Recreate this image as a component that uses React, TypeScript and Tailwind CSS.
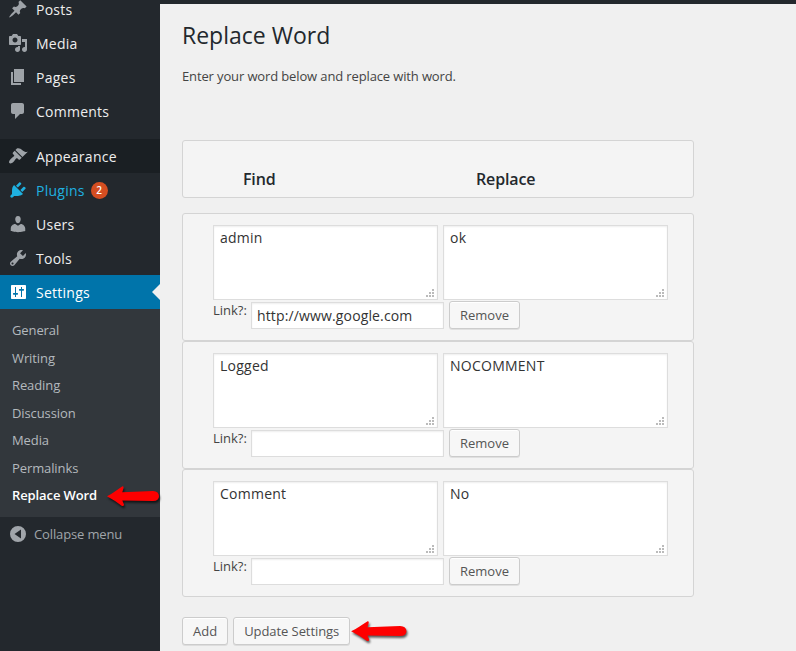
import React from "react";

const icons: Record<string, React.ReactNode> = {
  Posts: (
    <path d="M10.44 3.02l1.82-1.82 6.36 6.35-1.83 1.82c-1.05-.68-2.48-.57-3.41.36l-.75.75c-.92.93-1.04 2.35-.35 3.41l-1.83 1.82-2.41-2.41-2.8 2.79c-.42.42-3.38 2.71-3.8 2.29s1.86-3.39 2.28-3.81l2.79-2.79L4.1 9.36l1.83-1.82c1.05.69 2.48.57 3.4-.36l.75-.75c.93-.92 1.05-2.35.36-3.41z" />
  ),
  Media: (
    <path
      fillRule="evenodd"
      d="M13 11V4c0-.55-.45-1-1-1h-1.67L9 1H5L3.67 3H2c-.55 0-1 .45-1 1v7c0 .55.45 1 1 1h10c.55 0 1-.45 1-1zM7 4.5c1.38 0 2.5 1.12 2.5 2.5S8.38 9.5 7 9.5 4.5 8.38 4.5 7 5.62 4.5 7 4.5zM14 6h5v10.5c0 1.38-1.12 2.5-2.5 2.5S14 17.88 14 16.5s1.12-2.5 2.5-2.5c.17 0 .34.02.5.05V9h-3V6zm-4 8.05V13h2v3.5c0 1.38-1.12 2.5-2.5 2.5S7 17.88 7 16.5 8.12 14 9.5 14c.17 0 .34.02.5.05z"
    />
  ),
  Pages: <path d="M6 15V2h10v13H6zm-1 1h8v2H3V5h2v11z" />,
  Comments: (
    <path d="M5 2h9c1.1 0 2 .9 2 2v7c0 1.1-.9 2-2 2h-2l-5 5v-5H5c-1.1 0-2-.9-2-2V4c0-1.1.9-2 2-2z" />
  ),
  Appearance: (
    <path d="M14.48 11.06L7.41 3.99l1.5-1.5c.5-.56 2.3-.47 3.51.32 1.21.8 1.43 1.28 2.91 2.1 1.18.64 2.45 1.26 4.45.85zm-.71.71L6.7 4.7 4.93 6.47c-.39.39-.39 1.02 0 1.41l1.06 1.06c.39.39.39 1.03 0 1.42-.6.6-1.43 1.11-2.21 1.69-.35.26-.7.53-1.01.84C1.43 14.23.4 16.08 1.4 17.07c.99 1 2.84-.03 4.18-1.36.31-.31.58-.66.85-1.02.57-.78 1.08-1.61 1.69-2.21.39-.39 1.02-.39 1.41 0l1.06 1.06c.39.39 1.02.39 1.41 0z" />
  ),
  Plugins: (
    <path d="M13.11 4.36L9.87 7.6 8 5.73l3.24-3.24c.35-.34 1.05-.2 1.56.32.52.51.66 1.21.31 1.55zm-8 1.77l.91-1.12 9.01 9.01-1.19.84c-.71.71-2.63 1.16-3.82 1.16H6.14L4.9 17.26c-.59.59-1.54.59-2.12 0-.59-.58-.59-1.53 0-2.12l1.24-1.24v-3.88c0-1.13.4-3.19 1.09-3.89zm7.26 3.97l3.24-3.24c.34-.35 1.04-.21 1.55.31.52.51.66 1.21.31 1.55l-3.24 3.25z" />
  ),
  Users: (
    <path d="M10 9.25c-2.27 0-2.73-3.44-2.73-3.44C7 4.02 7.82 2 9.97 2c2.16 0 2.98 2.02 2.71 3.81 0 0-.41 3.44-2.68 3.44zm0 2.57L12.72 10c2.39 0 4.52 2.33 4.52 4.53v2.49s-3.65 1.13-7.24 1.13c-3.65 0-7.24-1.13-7.24-1.13v-2.49c0-2.25 1.94-4.48 4.47-4.48z" />
  ),
  Tools: (
    <path
      fillRule="evenodd"
      d="M16.68 9.77c-1.34 1.34-3.3 1.67-4.95.99l-5.41 6.52c-.99.99-2.59.99-3.58 0s-.99-2.59 0-3.57l6.52-5.42c-.68-1.65-.35-3.61.99-4.95 1.28-1.28 3.12-1.62 4.72-1.06l-2.89 2.89 2.82 2.82 2.86-2.87c.53 1.58.18 3.39-1.08 4.65zM3.81 16.21c.4.39 1.04.39 1.43 0 .4-.4.4-1.04 0-1.43-.39-.4-1.03-.4-1.43 0-.39.39-.39 1.03 0 1.43z"
    />
  ),
  Settings: (
    <path
      fillRule="evenodd"
      d="M4 3h13c.55 0 1 .45 1 1v12c0 .55-.45 1-1 1H4c-.55 0-1-.45-1-1V4c0-.55.45-1 1-1zM7 5v6H5.500c-.7 0-.7 1.700 0 1.700H7V15h1v-2.300h1.500c.7 0 .7-1.700 0-1.700H8V5zM13 5v2h-1.500c-.7 0-.7 1.700 0 1.700H13V15h1V8.700h1.500c.7 0 .7-1.700 0-1.700H14V5z"
    />
  ),
  Collapse: (
    <path fillRule="evenodd" d="M10 2a8 8 0 1 1 0 16 8 8 0 0 1 0-16zM13 5.500v9L6.500 10z" />
  ),
};

function Icon({ name }: { name: string }) {
  return (
    <svg className="mr-2 size-5 shrink-0" viewBox="0 0 20 20" fill="currentColor">
      {icons[name]}
    </svg>
  );
}

function MenuItem({ name }: { name: string }) {
  const tone =
    name === "Settings"
      ? "bg-[#0074aa] text-white"
      : name === "Appearance"
        ? "bg-[#1a1f23] text-[#eee]"
        : name === "Plugins"
          ? "text-[#1fb1e0]"
          : "text-[#eee]";
  const iconTone =
    name === "Settings" ? "text-white" : name === "Plugins" ? "text-[#1fb1e0]" : "text-[#9ea3a8]";
  return (
    <div className={`relative flex h-[34px] shrink-0 items-center pl-2 text-[14px] tracking-[0.25px] ${tone}`}>
      <span className={iconTone}>
        <Icon name={name} />
      </span>
      <span>{name}</span>
      {name === "Plugins" && (
        <span className="ml-[6px] flex size-[17px] items-center justify-center rounded-full bg-[#d54e21] text-[10px] font-semibold tracking-normal text-white">
          2
        </span>
      )}
      {name === "Settings" && (
        <span className="absolute top-[9px] right-0 border-y-8 border-r-8 border-y-transparent border-r-[#f0f0f0]" />
      )}
    </div>
  );
}

function Arrow({ className }: { className: string }) {
  return (
    <svg className={`h-7 overflow-visible ${className}`} viewBox="0 0 62 28" preserveAspectRatio="none">
      <path
        className="drop-shadow-[1px_2px_1px_rgba(0,0,0,0.65)]"
        fill="#fe0000"
        d="M2 13.200C7 11 12 7 17.500 3.200Q19 3 18.500 5L17.300 9.200L48 8Q54 8.600 54 13.200Q54 18 48 18L17.300 17.500L19 21.500Q19 23.500 17 23Q10 17.500 2 13.200Z"
      />
    </svg>
  );
}

const buttonStyle =
  "h-7 shrink-0 rounded-[3px] border border-[#ccc] bg-[#f7f7f7] px-[10px] text-[13px] leading-[26px] text-[#555] shadow-[inset_0_1px_0_#fff,0_1px_0_rgba(0,0,0,0.08)]";

function Area({ value }: { value: string }) {
  return (
    <div className="relative h-[75px] w-[225px] shrink-0">
      <textarea
        defaultValue={value}
        className="block size-full resize-none overflow-hidden border border-[#ddd] bg-white px-[6px] py-[2px] text-[14px] leading-[20px] tracking-[0.25px] text-[#333] shadow-[inset_0_1px_2px_rgba(0,0,0,0.07)]"
      />
      <svg className="absolute right-1 bottom-[3px] h-2 w-2" viewBox="0 0 8 8" fill="#bbb">
        <path d="M6 0h2v2H6zM3 3h2v2H3zM6 3h2v2H6zM0 6h2v2H0zM3 6h2v2H3zM6 6h2v2H6z" />
      </svg>
    </div>
  );
}

function Row({ find, replace, link }: { find: string; replace: string; link: string }) {
  return (
    <div className="h-32 w-[512px] rounded-[3px] border border-[#d4d4d4] bg-[#f4f4f4] pt-[11px] pl-[30px]">
      <div className="flex gap-[5px]">
        <Area value={find} />
        <Area value={replace} />
      </div>
      <div className="flex pt-px">
        <span className="w-[38px] text-[13px] leading-[19px] whitespace-nowrap">Link?:</span>
        <input
          defaultValue={link}
          className="mt-px mr-[5px] h-[27px] w-[193px] border border-[#ddd] bg-white px-[5px] pb-px text-[14px] tracking-[0.14px] text-[#333] shadow-[inset_0_1px_2px_rgba(0,0,0,0.07)]"
        />
        <button className={buttonStyle}>Remove</button>
      </div>
    </div>
  );
}

export default function App() {
  return (
    <div className="flex h-[651px] w-[796px] overflow-hidden bg-[#f0f0f0] font-['Open_Sans',sans-serif] text-[#444]">
      <nav className="flex w-40 shrink-0 flex-col bg-[#23282d]">
        <div className="-mt-2 mb-[11px]">
          {["Posts", "Media", "Pages", "Comments"].map((n) => (
            <MenuItem key={n} name={n} />
          ))}
        </div>
        {["Appearance", "Plugins", "Users", "Tools", "Settings"].map((n) => (
          <MenuItem key={n} name={n} />
        ))}
        <div className="h-[208px] shrink-0 bg-[#32373c] pt-2 pl-3 text-[13px] tracking-[-0.1px] text-[#b4b9be]">
          {["General", "Writing", "Reading", "Discussion", "Media", "Permalinks"].map((n) => (
            <div key={n} className="h-[27.56px] leading-[27.56px]">
              {n}
            </div>
          ))}
          <div className="relative h-[27.56px] leading-[27.56px] font-semibold text-white">
            Replace Word
            <Arrow className="absolute top-px left-[93px] z-10 w-[62px]" />
          </div>
        </div>
        <div className="flex h-[34px] items-center pl-2 text-[13px] tracking-[-0.13px] text-[#a0a5aa]">
          <Icon name="Collapse" />
          <span className="mt-px -ml-[2px]">Collapse menu</span>
        </div>
      </nav>
      <main className="flex grow flex-col border-t-4 border-[#23282d] pl-[22px]">
        <h1 className="mt-4 text-[23px] leading-[30px] text-[#23282d]">Replace Word</h1>
        <p className="mt-[17px] text-[13px] leading-[19px] tracking-[-0.13px]">
          Enter your word below and replace with word.
        </p>
        <div className="mt-[54px] flex h-[58px] w-[512px] rounded-[3px] border border-[#d4d4d4] bg-[#f4f4f4] pt-[27px] pl-[60px] text-[16px] leading-[22px] font-semibold tracking-[-0.15px] text-[#23282d]">
          <span className="w-[233px]">Find</span>
          <span>Replace</span>
        </div>
        <div className="mt-[15px]">
          <Row find="admin" replace="ok" link="http://www.google.com" />
          <Row find="Logged" replace="NOCOMMENT" link="" />
          <Row find="Comment" replace="No" link="" />
        </div>
        <div className="mt-5 flex">
          <button className={buttonStyle}>Add</button>
          <button className={`ml-[5px] tracking-[-0.07px] ${buttonStyle}`}>Update Settings</button>
          <Arrow className="mt-px -ml-px w-[66px]" />
        </div>
      </main>
    </div>
  );
}
